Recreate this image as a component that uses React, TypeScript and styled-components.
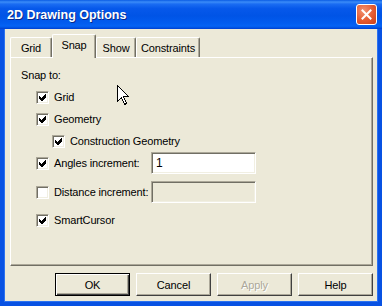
import React from "react";
import styled, { createGlobalStyle } from "styled-components";

const Global = createGlobalStyle`
  html, body { margin: 0; padding: 0; overflow: hidden; background: #ECE9D8; }
  body { font-family: "Liberation Sans", Arial, sans-serif; font-size: 11px; color: #000; letter-spacing: -0.15px; }
  * { box-sizing: border-box; }
`;

const Window = styled.div`
  position: relative;
  width: 382px;
  height: 306px;
  display: flex;
  flex-direction: column;
`;

const TitleBar = styled.div`
  height: 29px;
  flex: none;
  display: flex;
  align-items: center;
  justify-content: space-between;
  padding: 0 5px 0 7px;
  background: linear-gradient(
    180deg,
    #0a5ce4 0%,
    #3b8cf8 7%,
    #1a6cf2 14%,
    #0658ea 30%,
    #0054e6 55%,
    #025cef 80%,
    #0563f4 90%,
    #0050e0 96%,
    #003dd0 100%
  );
`;

const Title = styled.span`
  font-family: "Liberation Sans", Arial, sans-serif;
  font-weight: bold;
  font-size: 12.5px;
  letter-spacing: 0;
  color: #fff;
  text-shadow: 1px 1px 0 #0a2a8a;
  padding-top: 1px;
`;

const CloseButton = styled.div`
  width: 21px;
  height: 21px;
  border: 1px solid #fff;
  border-radius: 3px;
  background: radial-gradient(circle at 35% 30%, #f29272 0%, #e45a30 55%, #c8401a 100%);
  display: flex;
  align-items: center;
  justify-content: center;
`;

const Frame = styled.div`
  flex: 1;
  display: flex;
  flex-direction: column;
  background: #ece9d8;
  border: 4px solid #0852e3;
  border-top: none;
  box-shadow: inset 1px 0 0 #2c72f0, inset -1px 0 0 #2c72f0, inset 0 -1px 0 #2c72f0;
  padding: 5px 5px 6px 6px;
`;

const TabRow = styled.div`
  display: flex;
  align-items: flex-end;
  height: 23px;
  flex: none;
`;

const Tab = styled.div<{ $active?: boolean; $w: number }>`
  position: relative;
  z-index: ${(p) => (p.$active ? 2 : 1)};
  width: ${(p) => p.$w}px;
  height: ${(p) => (p.$active ? 24 : 20)}px;
  margin-bottom: ${(p) => (p.$active ? -1 : 0)}px;
  padding-bottom: ${(p) => (p.$active ? 3 : 0)}px;
  background: #ece9d8;
  border-top: 1px solid #fff;
  border-left: 1px solid #fff;
  border-right: 1px solid #716f64;
  box-shadow: inset -1px 0 0 #aca899;
  border-radius: 2px 2px 0 0;
  display: flex;
  align-items: center;
  justify-content: center;
  font-size: 11px;
`;

const Panel = styled.div`
  flex: 1;
  position: relative;
  border-top: 1px solid #fff;
  border-left: 1px solid #fff;
  border-right: 1px solid #716f64;
  border-bottom: 1px solid #716f64;
  box-shadow: inset -1px -1px 0 #aca899;
  padding: 10px 10px 0 10px;
  display: flex;
  flex-direction: column;
`;

const GroupLabel = styled.div`
  line-height: 14px;
  height: 14px;
  margin-bottom: 4px;
`;

const Row = styled.div<{ $indent?: number; $space?: number }>`
  display: flex;
  align-items: center;
  height: 22px;
  margin-left: ${(p) => 15 + (p.$indent ?? 0)}px;
  margin-top: ${(p) => p.$space ?? 0}px;
`;

const Box = styled.span`
  width: 13px;
  height: 13px;
  flex: none;
  background: #fff;
  border-top: 1px solid #aca899;
  border-left: 1px solid #aca899;
  border-right: 1px solid #fff;
  border-bottom: 1px solid #fff;
  box-shadow: inset 1px 1px 0 #716f64, inset -1px -1px 0 #f1efe2;
  display: flex;
  align-items: center;
  justify-content: center;
`;

const Label = styled.span<{ $w?: number }>`
  margin-left: 5px;
  white-space: nowrap;
  ${(p) => (p.$w ? `width: ${p.$w}px; flex: none;` : "")}
`;

const Field = styled.div<{ $disabled?: boolean }>`
  width: 105px;
  height: 22px;
  background: ${(p) => (p.$disabled ? "#ece9d8" : "#fff")};
  border-top: 1px solid #aca899;
  border-left: 1px solid #aca899;
  border-right: 1px solid #fff;
  border-bottom: 1px solid #fff;
  box-shadow: inset 1px 1px 0 #716f64, inset -1px -1px 0 #f1efe2;
  padding: 2px 0 0 4px;
  font-size: 12px;
  line-height: 16px;
`;

const ButtonRow = styled.div`
  display: flex;
  justify-content: flex-end;
  gap: 6px;
  margin-top: 7px;
  flex: none;
`;

const Button = styled.div<{ $default?: boolean; $disabled?: boolean }>`
  width: 75px;
  height: 23px;
  display: flex;
  align-items: center;
  justify-content: center;
  background: #ece9d8;
  border: 1px solid;
  border-color: ${(p) => (p.$default ? "#000" : "#fff #404040 #404040 #fff")};
  box-shadow: ${(p) =>
    p.$default
      ? "inset 1px 1px 0 #fff, inset -1px -1px 0 #404040, inset -2px -2px 0 #aca899"
      : "inset -1px -1px 0 #aca899"};
  color: ${(p) => (p.$disabled ? "#aca899" : "#000")};
  text-shadow: ${(p) => (p.$disabled ? "1px 1px 0 #fff" : "none")};
  font-size: 11px;
`;

const Cursor = styled.svg`
  position: absolute;
  left: 117px;
  top: 85px;
  z-index: 5;
`;

const Check = () => (
  <svg width="7" height="7" viewBox="0 0 7 7" shapeRendering="crispEdges">
    <path d="M0 2 L2 4 L6 0 L7 0 L7 3 L3 7 L2 7 L0 5 Z" fill="#000" />
  </svg>
);

const CheckBox = ({ checked }: { checked?: boolean }) => <Box>{checked ? <Check /> : null}</Box>;

export default function App() {
  return (
    <>
      <Global />
      <Window>
        <TitleBar>
          <Title>2D Drawing Options</Title>
          <CloseButton>
            <svg width="11" height="11" viewBox="0 0 11 11">
              <path d="M1.5 1.5 L9.5 9.5 M9.5 1.5 L1.5 9.5" stroke="#fff" strokeWidth="2" strokeLinecap="square" />
            </svg>
          </CloseButton>
        </TitleBar>
        <Frame>
          <TabRow>
            <Tab $w={42}>Grid</Tab>
            <Tab $w={44} $active>Snap</Tab>
            <Tab $w={40}>Show</Tab>
            <Tab $w={64}>Constraints</Tab>
          </TabRow>
          <Panel>
            <GroupLabel>Snap to:</GroupLabel>
            <Row>
              <CheckBox checked />
              <Label>Grid</Label>
            </Row>
            <Row>
              <CheckBox checked />
              <Label>Geometry</Label>
            </Row>
            <Row $indent={16}>
              <CheckBox checked />
              <Label>Construction Geometry</Label>
            </Row>
            <Row>
              <CheckBox checked />
              <Label $w={97}>Angles increment:</Label>
              <Field>1</Field>
            </Row>
            <Row $space={7}>
              <CheckBox />
              <Label $w={97}>Distance increment:</Label>
              <Field $disabled />
            </Row>
            <Row $space={6}>
              <CheckBox checked />
              <Label>SmartCursor</Label>
            </Row>
          </Panel>
          <ButtonRow>
            <Button $default>OK</Button>
            <Button>Cancel</Button>
            <Button $disabled>Apply</Button>
            <Button>Help</Button>
          </ButtonRow>
        </Frame>
        <Cursor width="13" height="21" viewBox="0 0 13 21">
          <path
            d="M0.5 0.5 L0.5 16.5 L4.5 12.5 L7.5 19.5 L9.5 18.5 L6.5 11.5 L11.5 11.5 Z"
            fill="#fff"
            stroke="#000"
            strokeWidth="1"
            shapeRendering="crispEdges"
          />
        </Cursor>
      </Window>
    </>
  );
}
